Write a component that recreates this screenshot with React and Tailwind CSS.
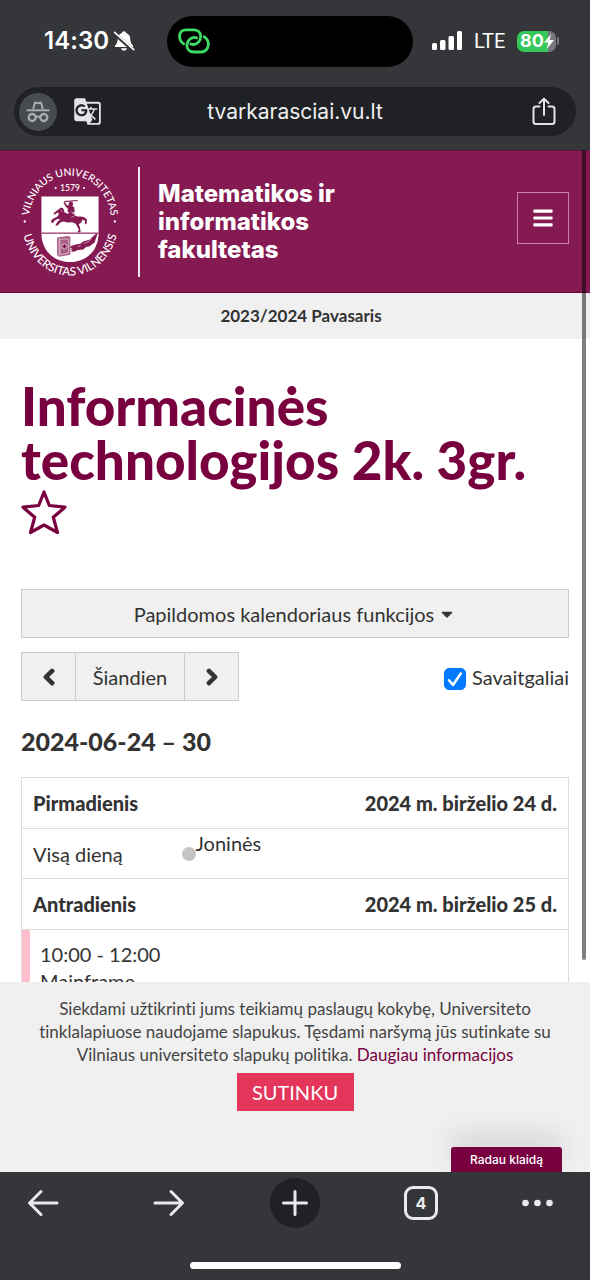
import { FaBars, FaCaretDown, FaChevronLeft, FaChevronRight } from "react-icons/fa";
import { MdGTranslate } from "react-icons/md";

function BellOff() {
  return (
    <svg viewBox="0 0 22 22" className="h-[22px] w-[22px]" aria-hidden="true">
      <path d="M11 1.2c-1.2 0-2 .8-2.2 1.8C6 3.900 4.800 6.200 4.700 9c-.1 3.200-.8 4.800-2.400 6.200-.9.800-.5 1.900.6 1.900h16.200c1.100 0 1.500-1.100.6-1.900C18.100 13.800 17.400 12.200 17.300 9c-.1-2.800-1.300-5.100-4.100-6-.2-1-1-1.800-2.200-1.800ZM7.900 18.300a3.200 3.200 0 0 0 6.200 0Z" fill="#fff" />
      <path d="M1.200 3.300 20.200 20.300" stroke="#35363a" strokeWidth="3.600" />
      <path d="M1.600 2.300 20.800 19.700" stroke="#fff" strokeWidth="1.600" strokeLinecap="round" />
    </svg>
  );
}

function HotspotLinks() {
  return (
    <svg viewBox="0 0 32 26" className="h-[26px] w-8" fill="none" stroke="#3ddc64" strokeWidth="2.800" strokeLinecap="round" aria-hidden="true">
      <path d="M5.700 15.800C2.800 13.800 1.500 10.500 1.600 8 1.700 4 4.500 1.800 8 1.800h7.500c4.200 0 7.200 2.700 7.200 6.600 0 4.200-3 7.800-7 8.100-1.100.1-2-.1-2.800-.5" />
      <path d="M26.300 8.800c2.800 1.900 4.200 5 4.100 7.700-.1 4-3 7.500-7 7.500h-7.500c-4 0-7-2.700-7-6.400 0-4.200 3-7.900 7-8.200 1.100-.1 2 .1 2.800.5" />
    </svg>
  );
}

function Signal() {
  return (
    <svg viewBox="0 0 30 20" className="h-5 w-[30px]" fill="#fff" aria-hidden="true">
      <rect x="0" y="12" width="5" height="7" rx="1.500" />
      <rect x="8" y="9" width="5.500" height="10" rx="1.500" />
      <rect x="16.500" y="5" width="5.500" height="14" rx="1.500" />
      <rect x="25" y="0" width="5" height="19" rx="1.500" />
    </svg>
  );
}

function Battery() {
  return (
    <div className="flex items-center gap-px">
      <div className="flex h-[21px] w-[39px] items-center justify-center rounded-[7px] bg-linear-to-r from-[#35c759] from-80% to-[#77797d] to-80%">
        <span className="text-lg leading-5 font-bold text-white">80</span>
        <svg viewBox="0 0 10 15" className="h-[15px] w-[10px]" aria-hidden="true">
          <path d="M7 0 0 8.600h4.200L2.800 15 10 6H5.700Z" fill="#fff" />
        </svg>
      </div>
      <div className="h-2 w-0.5 rounded-r-full bg-[#77797d]" />
    </div>
  );
}

function Incognito() {
  return (
    <svg viewBox="0 0 24 22" className="h-[22px] w-6" fill="none" stroke="#a9adb3" aria-hidden="true">
      <path d="M7.200 8 9 1.500 12 2.300 15 1.500 16.800 8" strokeWidth="2" strokeLinejoin="round" />
      <path d="M.5 9.300h23" strokeWidth="2" />
      <circle cx="6.200" cy="16.500" r="3.500" strokeWidth="2.300" />
      <circle cx="17.800" cy="16.500" r="3.500" strokeWidth="2.300" />
      <path d="M9.700 16.200q2.300-1.300 4.600 0" strokeWidth="2" />
    </svg>
  );
}

function Share() {
  return (
    <svg viewBox="0 0 24 30" className="h-[30px] w-6" fill="none" stroke="#e3e4e8" strokeWidth="2" strokeLinecap="round" strokeLinejoin="round" aria-hidden="true">
      <path d="M7.500 9.500H4A2.500 2.500 0 0 0 1.500 12v12.500A2.500 2.500 0 0 0 4 27h16a2.500 2.500 0 0 0 2.500-2.500V12A2.500 2.500 0 0 0 20 9.500h-3.500" />
      <path d="M12 18V2M7.500 6 12 1.600 16.500 6" />
    </svg>
  );
}

function Emblem() {
  return (
    <svg viewBox="55 45 312 340" className="h-[113px] w-[104px]" role="img" aria-label="Vilniaus universitetas">
      <defs>
        <path id="arc-top" d="M87 215A124 138 0 0 1 335 215" />
        <path id="arc-bottom" d="M66 215A145 163 0 0 0 356 215" />
      </defs>
      <g fill="#fff" fontFamily="Lato, sans-serif" fontWeight="500" textAnchor="middle">
        <text fontSize="31"><textPath href="#arc-top" startOffset="50%">VILNIAUS UNIVERSITETAS</textPath></text>
        <text fontSize="35"><textPath href="#arc-bottom" startOffset="50%">UNIVERSITAS VILNENSIS</textPath></text>
        <text x="211" y="122" fontSize="26">1579</text>
      </g>
      <g fill="#fff">
        <circle cx="168" cy="114" r="3" />
        <circle cx="253" cy="114" r="3" />
        <circle cx="75" cy="215" r="3.500" />
        <circle cx="346" cy="215" r="3.500" />
        <path d="M125 140H297V250C297 300 262 337 211 337S125 300 125 250Z" />
      </g>
      <path d="M125 250H297" stroke="#78003f" strokeWidth="3" />
      <g fill="#851a52">
        <path d="M175 180l9-7 7 3 4 12 9 4 6-3 14 3 3 6 9 3c9-3 20 1 26 8l-1 13-5 2v-11l-7-4-4 9-8 5 4 10 2 13-8 3-1-4 4-3-3-8-7-12-10-5-15 1-12-3-9 3-9 10-6-2 7-12 7-4-6-3-9 4-7 9-4-2-1-6 6-5 12-6 5-6-1-7-7 3-5 4-3-4 4-4Z" />
        <path d="M207 160l5-5 6 1 3 6-3 6 6 5 1 14-12 4-9-5v-11l-6-5-7-12 4-2 7 10 5 1Z" />
        <path d="M194 153l40-3v3l-40 4Z" />
        <path d="M172 263l33-4 7 2v54l-33 6-7-5Z" opacity=".7" />
        <path d="M214 289l14-5 14-2 9-7 18-5 22-20 2 4-8 24-16 12-9 1-9 8-16 2-12 5-10-1 6-5-8-1 7-4-8-1Z" />
      </g>
      <g fill="none" stroke="#fff" strokeWidth="1.500">
        <path d="M178 265v52M181 268h26v42l-26 5ZM183 181l6 4M215 185l10 7M226 197l-12 6M252 282l16-7 8-10M234 291l10-4" />
        <circle cx="194" cy="290" r="8" />
      </g>
      <path d="m194 283 2 5 5 2-5 2-2 5-2-5-5-2 5-2Z" fill="#78003f" />
    </svg>
  );
}

function StatusBar() {
  return (
    <div className="flex h-[82px] items-center font-['Inter',sans-serif] text-white">
      <div className="flex flex-1 items-center justify-end gap-1 pr-8">
        <span className="text-2xl font-semibold">14:30</span>
        <BellOff />
      </div>
      <div className="flex h-[51px] w-[246px] items-center rounded-full bg-black pl-[11px]">
        <HotspotLinks />
      </div>
      <div className="flex flex-1 items-center gap-3 pr-[23px] pl-[19px]">
        <Signal />
        <span className="font-['Roboto',sans-serif] text-xl">LTE</span>
        <Battery />
      </div>
    </div>
  );
}

function AddressBar() {
  return (
    <div className="mx-3.5 mt-[5px] mb-3.5 flex h-[49px] items-center rounded-full bg-[#202125]">
      <div className="flex flex-1 items-center gap-4 pr-[15px] pl-[5px]">
        <span className="flex size-[38px] items-center justify-center rounded-full bg-[#484c51]">
          <Incognito />
        </span>
        <button type="button" aria-label="Versti puslapį" className="text-[#e3e4e8]">
          <MdGTranslate className="size-[29px]" />
        </button>
      </div>
      <span className="font-['Inter',sans-serif] text-[21px] text-[#eff0f2]">tvarkarasciai.vu.lt</span>
      <div className="flex flex-1 justify-end pr-5">
        <button type="button" aria-label="Bendrinti"><Share /></button>
      </div>
    </div>
  );
}

function SiteHeader() {
  return (
    <header className="flex h-[143px] shrink-0 items-center border-t border-b border-t-[#5b1640] border-b-[#78003f] bg-[#851a52] pr-[21px] pl-[18px]">
      <Emblem />
      <div className="ml-4 h-[110px] w-0.5 bg-[#f3e6ee]" />
      <p className="ml-[18px] max-w-56 flex-1 font-['Inter',sans-serif] text-2xl leading-7 font-extrabold text-white">
        Matematikos ir informatikos fakultetas
      </p>
      <button type="button" aria-label="Meniu" className="mb-2 ml-auto flex size-[52px] items-center justify-center border border-[#cf7fab] text-white">
        <FaBars className="size-[22px]" />
      </button>
    </header>
  );
}

function DayRow({ day, date }) {
  return (
    <tr className="border border-[#dddddd]">
      <th colSpan={3} className="p-0">
        <div className="flex h-[50px] items-center justify-between px-[11px] font-black">
          <span>{day}</span>
          <span>{date}</span>
        </div>
      </th>
    </tr>
  );
}

const navButton = "flex items-center justify-center border border-[#cccccc] bg-[#f0f0f0]";

function Schedule() {
  return (
    <main className="px-[21px] text-xl text-[#333333]">
      <h1 className="mt-10 text-[53px] leading-[54px] font-black text-[#78003f]">
        Informacinės technologijos 2k. 3gr.
        <button type="button" aria-label="Pridėti prie mėgstamų" className="block pt-0.5">
          <svg viewBox="0 0 46 46" className="size-[46px]" fill="none" stroke="#78003f" strokeWidth="3.200" strokeLinejoin="round" aria-hidden="true">
            <path d="M23 3 28.300 16.500 44 18.200 32.300 28.300 36.500 43.500 23 36 9.500 43.500 13.700 28.300 2 18.200 17.700 16.500Z" />
          </svg>
        </button>
      </h1>
      <button type="button" className="mt-[54px] flex h-[49px] w-full items-center justify-center gap-1 border border-[#cccccc] bg-[#f0f0f0]">
        Papildomos kalendoriaus funkcijos
        <FaCaretDown className="size-[18px]" />
      </button>
      <div className="mt-3.5 flex items-center justify-between">
        <div className="flex h-[49px] -space-x-px">
          <button type="button" aria-label="Ankstesnė savaitė" className={`w-[55px] ${navButton}`}>
            <FaChevronLeft className="size-[18px]" strokeWidth="50" stroke="currentColor" />
          </button>
          <button type="button" className={`w-[110px] ${navButton}`}>Šiandien</button>
          <button type="button" aria-label="Kita savaitė" className={`w-[55px] ${navButton}`}>
            <FaChevronRight className="size-[18px]" strokeWidth="50" stroke="currentColor" />
          </button>
        </div>
        <label className="flex items-center gap-1.5">
          <span className="relative mt-1 size-[22px]">
            <input type="checkbox" defaultChecked className="peer block size-[22px] appearance-none rounded-[5px] border border-[#999999] checked:border-[#007aff] checked:bg-[#007aff]" />
            <svg viewBox="0 0 22 22" className="pointer-events-none absolute inset-0 hidden peer-checked:block" fill="none" stroke="#fff" strokeWidth="2.500" strokeLinecap="round" strokeLinejoin="round" aria-hidden="true">
              <path d="M5 12.200 9 17 16.800 5.500" />
            </svg>
          </span>
          Savaitgaliai
        </label>
      </div>
      <h2 className="mt-6 text-[25px] leading-8 font-black">2024-06-24 – 30</h2>
      <table className="mt-5 w-full border-collapse border border-[#dddddd]">
        <tbody>
          <DayRow day="Pirmadienis" date="2024 m. birželio 24 d." />
          <tr className="h-[50px] border border-[#dddddd]">
            <td className="w-40 pl-[11px]">Visą dieną</td>
            <td className="w-3.5 p-0"><span className="block size-3.5 rounded-full bg-[#c4c4c4]" /></td>
            <td className="p-0 align-top">Joninės</td>
          </tr>
          <DayRow day="Antradienis" date="2024 m. birželio 25 d." />
          <tr>
            <td colSpan={3} className="p-0">
              <div className="border-l-8 border-[#ffc0cb] px-[10px] py-[11px] leading-[27px]">
                <p>10:00 - 12:00</p>
                <p>Mainframe</p>
              </div>
            </td>
          </tr>
        </tbody>
      </table>
    </main>
  );
}

function CookieNotice() {
  return (
    <aside className="relative flex h-[190px] shrink-0 flex-col items-center bg-[#f0f0f0] px-5 pt-[15px] text-center text-[#444444]">
      <p className="text-[17px] leading-[23px]">
        Siekdami užtikrinti jums teikiamų paslaugų kokybę, Universiteto tinklalapiuose naudojame slapukus. Tęsdami naršymą jūs sutinkate su Vilniaus universiteto slapukų politika.{" "}
        <a href="#informacija" className="text-[#78003f]">Daugiau informacijos</a>
      </p>
      <button type="button" className="mt-[7px] h-[38px] w-[117px] bg-[#e4355a] text-xl text-white">SUTINKU</button>
      <button type="button" className="absolute right-7 bottom-0 h-[25px] w-[111px] rounded-t-[3px] bg-[#78003f] font-['Inter',sans-serif] text-xs font-medium text-white shadow-[0_-12px_28px_rgba(0,0,0,0.12)]">
        Radau klaidą
      </button>
    </aside>
  );
}

const navItem = "flex h-[50px] w-[50px] items-center";

function BrowserBar() {
  const icon = "size-9";
  return (
    <footer className="relative z-10 shrink-0 bg-[#35363a] pt-1.5 pb-[11px] text-[#e8eaed]">
      <nav className="flex items-center justify-between px-[18px]">
        <button type="button" aria-label="Atgal" className={`${navItem} justify-center`}>
          <svg viewBox="0 0 36 36" className={icon} fill="none" stroke="currentColor" strokeWidth="3" strokeLinecap="round" strokeLinejoin="round"><path d="M32 18H5M16 6.500 4.500 18 16 29.500" /></svg>
        </button>
        <button type="button" aria-label="Pirmyn" className={`${navItem} justify-center`}>
          <svg viewBox="0 0 36 36" className={icon} fill="none" stroke="currentColor" strokeWidth="3" strokeLinecap="round" strokeLinejoin="round"><path d="M4 18h27M20 6.500 31.500 18 20 29.500" /></svg>
        </button>
        <button type="button" aria-label="Naujas skirtukas" className={`${navItem} justify-center rounded-full bg-[#202125]`}>
          <svg viewBox="0 0 36 36" className={icon} fill="none" stroke="currentColor" strokeWidth="3" strokeLinecap="round"><path d="M18 6.500v23M6.500 18h23" /></svg>
        </button>
        <button type="button" aria-label="Skirtukai" className={`${navItem} justify-center`}>
          <span className="flex size-[34px] items-center justify-center rounded-[9px] border-3 border-[#e8eaed] font-['Inter',sans-serif] text-base font-bold">4</span>
        </button>
        <button type="button" aria-label="Daugiau" className={`${navItem} justify-start`}>
          <svg viewBox="0 0 36 36" className={icon} fill="currentColor"><circle cx="3.500" cy="18" r="3.300" /><circle cx="15.500" cy="18" r="3.300" /><circle cx="27.500" cy="18" r="3.300" /></svg>
        </button>
      </nav>
      <div className="mx-auto mt-[34px] h-[7px] w-[211px] rounded-full bg-white" />
    </footer>
  );
}

export default function App() {
  return (
    <div className="flex h-screen flex-col overflow-hidden bg-[#35363a] font-['Lato',sans-serif] [font-variant-ligatures:none]">
      <StatusBar />
      <AddressBar />
      <div className="relative flex min-h-0 flex-1 flex-col bg-white">
        <div className="min-h-0 flex-1 overflow-hidden">
          <SiteHeader />
          <p className="bg-[#f0f0f0] py-3 pl-3 text-center text-[17px] leading-[22px] font-bold text-[#333333]">2023/2024 Pavasaris</p>
          <Schedule />
        </div>
        <CookieNotice />
        <div className="absolute top-0 right-1 bottom-[212px] w-1 rounded-b-full bg-black/50" />
      </div>
      <BrowserBar />
    </div>
  );
}
